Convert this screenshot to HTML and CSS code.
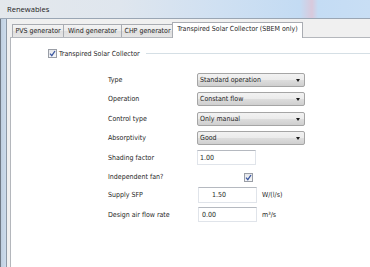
FILE: index.html
```html
<!DOCTYPE html>
<html lang="en">
<head>
    <meta charset="UTF-8">
    <title>Renewables</title>
    <link rel="stylesheet" href="styles.css">
</head>
<body>
<div class="window">
    <div class="titlebar">Renewables</div>
    <div class="frame">
        <div class="frame-left"></div>
        <div class="client">
            <div class="tabs">
                <span class="tab tab-pvs">PVS generator</span>
                <span class="tab tab-wind">Wind generator</span>
                <span class="tab tab-chp">CHP generator</span>
                <span class="tab tab-active">Transpired Solar Collector (SBEM only)</span>
            </div>
            <div class="panel">
                <div class="group-head">
                    <span class="check"><svg viewBox="0 0 9 9" width="9" height="9"><path d="M2 4.6 L3.8 6.6 L7 2" fill="none" stroke="#3b57a0" stroke-width="1.3"/></svg></span>
                    <span class="group-title">Transpired Solar Collector</span>
                    <span class="group-line"></span>
                </div>
                <div class="form">
                    <span class="label">Type</span>
                    <span class="combo">Standard operation<i class="arrow"></i></span>
                    <span></span>

                    <span class="label">Operation</span>
                    <span class="combo">Constant flow<i class="arrow"></i></span>
                    <span></span>

                    <span class="label">Control type</span>
                    <span class="combo">Only manual<i class="arrow"></i></span>
                    <span></span>

                    <span class="label">Absorptivity</span>
                    <span class="combo">Good<i class="arrow"></i></span>
                    <span></span>

                    <span class="label">Shading factor</span>
                    <span class="field">1.00</span>
                    <span></span>

                    <span class="label">Independent fan?</span>
                    <span class="check check-fan"><svg viewBox="0 0 9 9" width="9" height="9"><path d="M2 4.6 L3.8 6.6 L7 2" fill="none" stroke="#3b57a0" stroke-width="1.3"/></svg></span>
                    <span></span>

                    <span class="label">Supply SFP</span>
                    <span class="field field-tall field-sfp">1.50</span>
                    <span class="unit">W/(l/s)</span>

                    <span class="label">Design air flow rate</span>
                    <span class="field field-shift">0.00</span>
                    <span class="unit">m³/s</span>
                </div>
            </div>
        </div>
    </div>
</div>
</body>
</html>
```

FILE: styles.css
```css
body{
    margin:0;
    width:370px;
    height:267px;
    overflow:hidden;
    font-family:"DejaVu Sans",sans-serif;
    font-stretch:condensed;
    font-size:7px;
    color:#262626;
}
.window{
    width:370px;
    height:267px;
    display:flex;
    flex-direction:column;
}
.titlebar{
    height:18px;
    line-height:18px;
    padding-left:7px;
    font-family:"Open Sans",sans-serif;
    font-stretch:normal;
    font-size:7.6px;
    color:#222;
    background:linear-gradient(to right,#e4e8ec 0,#dfe6ee 120px,#cfe0f2 220px,#c3dbf3 300px,#d9c9dc 312px,#c4dcf4 318px,#c8def4 100%);
    border-bottom:1px solid #9aa6b4;
}
.frame{
    flex:1;
    display:flex;
}
.frame-left{
    width:6px;
    border-left:1px solid #707a86;
    background:linear-gradient(to right,#bfcfe0,#cddcec);
    box-sizing:border-box;
}
.client{
    flex:1;
    background:#f0f0f0;
    border-left:1px solid #8d99a6;
    padding:3px 0 0 3px;
    display:flex;
    flex-direction:column;
}
.tabs{
    display:flex;
    align-items:flex-end;
    height:15px;
    padding-left:2px;
    position:relative;
    z-index:1;
}
.tab{
    height:12px;
    line-height:12px;
    border:1px solid #a9acb2;
    border-bottom:0;
    background:linear-gradient(#f3f3f3,#ebebeb 50%,#dedede 51%,#e6e6e6);
    text-align:center;
    box-sizing:content-box;
    margin-right:-1px;
}
.tab-pvs{width:50px;}
.tab-wind{width:57px;}
.tab-chp{width:51px;}
.tab-active{
    width:129px;
    height:15px;
    line-height:13px;
    background:#fff;
    margin-left:-1px;
    margin-bottom:-1px;
}
.panel{
    flex:1;
    background:#fff;
    border:1px solid #b4b7bc;
    border-right:0;
    border-bottom:0;
    padding-top:11px;
}
.group-head{
    display:flex;
    align-items:center;
    height:9px;
    padding-left:37px;
}
.check{
    width:9px;
    height:9px;
    box-sizing:border-box;
    border:1px solid #9a9ea6;
    background:linear-gradient(#e4e6ea,#f6f7f9);
    display:flex;
    align-items:center;
    justify-content:center;
}
.check svg{
    display:block;
    margin:-1px;
}
.group-title{
    margin-left:2px;
}
.group-line{
    flex:1;
    margin-left:6px;
    border-top:1px solid #d5dfe5;
    border-bottom:1px solid #fff;
}
.form{
    margin:13px 0 0 97px;
    display:grid;
    grid-template-columns:89px 60px auto;
    grid-template-rows:18px 20px 19px 19px 21px 18px 18px 21px;
    align-items:center;
}
.combo{
    grid-column:span 2;
    width:108px;
    height:14px;
    line-height:12px;
    box-sizing:border-box;
    border:1px solid #a5a5a5;
    border-radius:2px;
    padding-left:2px;
    background:linear-gradient(#f2f2f2,#ebebeb 50%,#dddddd 51%,#cfcfcf);
    position:relative;
}
.arrow{
    position:absolute;
    right:4px;
    top:5px;
    border-left:2px solid transparent;
    border-right:2px solid transparent;
    border-top:3px solid #1a1a1a;
}
.combo + span{display:none;}
.field{
    width:59px;
    height:15px;
    line-height:14px;
    box-sizing:border-box;
    border:1px solid #e0e4ea;
    border-top-color:#b5b9c0;
    padding-left:2px;
    background:#fff;
}
.field-tall{height:16px;}
.field-sfp{margin-left:1px;padding-left:13px;}
.field-shift{margin-left:1px;padding-left:3px;}
.check-fan{
    margin-left:47px;
}
.unit{
    padding-left:5px;
}
```
